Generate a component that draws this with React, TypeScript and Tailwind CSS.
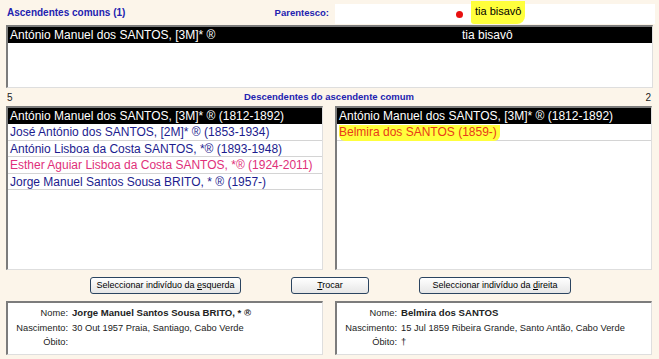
import React from 'react';

type Row = { text: string; tone: 'sel' | 'blue' | 'pink' | 'red' };

const leftRows: Row[] = [
  { text: 'António Manuel dos SANTOS, [3M]* ® (1812-1892)', tone: 'sel' },
  { text: 'José António dos SANTOS, [2M]* ® (1853-1934)', tone: 'blue' },
  { text: 'António Lisboa da Costa SANTOS, *® (1893-1948)', tone: 'blue' },
  { text: 'Esther Aguiar Lisboa da Costa SANTOS, *® (1924-2011)', tone: 'pink' },
  { text: 'Jorge Manuel Santos Sousa BRITO, * ® (1957-)', tone: 'blue' },
];

const rightRows: Row[] = [
  { text: 'António Manuel dos SANTOS, [3M]* ® (1812-1892)', tone: 'sel' },
  { text: 'Belmira dos SANTOS (1859-)', tone: 'red' },
];

const sunken =
  'bg-white border-l-2 border-t-2 border-r border-b border-l-[#7c7c7c] border-t-[#7c7c7c] border-r-[#dedede] border-b-[#dedede]';

const ListRow: React.FC<{ row: Row }> = ({ row }) => {
  if (row.tone === 'sel') {
    return (
      <div className="h-[16px] bg-black text-white pl-[2px] leading-[16px] whitespace-nowrap">
        {row.text}
      </div>
    );
  }
  const color =
    row.tone === 'pink' ? 'text-[#e0307a]' : row.tone === 'red' ? 'text-[#e83a1a]' : 'text-[#1c1c8e]';
  return (
    <div className={`h-[16.5px] border-b border-[#d4d4d4] pl-[2px] leading-[16px] whitespace-nowrap ${color}`}>
      {row.tone === 'red' ? (
        <span className="bg-[#ffff3c] rounded-b-[6px] pr-[3px] pb-[2px]">{row.text}</span>
      ) : (
        row.text
      )}
    </div>
  );
};

const Button: React.FC<{ className: string; children: React.ReactNode }> = ({ className, children }) => (
  <button
    className={`h-[17px] rounded-[3px] border border-[#2b4460] bg-gradient-to-b from-white to-[#e6e6e6] text-[9px] leading-[15px] text-black whitespace-nowrap ${className}`}
  >
    {children}
  </button>
);

const Details: React.FC<{ nome: string; nasc: string; obito: string }> = ({ nome, nasc, obito }) => (
  <div className={`${sunken} w-[317px] h-[54px] pt-[3px] text-[9.3px] leading-[14.5px] text-[#222]`}>
    {[
      ['Nome:', <b key="n" className="font-bold text-[9.6px]">{nome}</b>],
      ['Nascimento:', nasc],
      ['Óbito:', obito],
    ].map(([label, value], i) => (
      <div key={i} className="flex whitespace-nowrap">
        <span className="w-[64px] text-right pr-[4px]">{label}</span>
        <span>{value}</span>
      </div>
    ))}
  </div>
);

export default function App() {
  return (
    <div
      className="w-[659px] h-[359px] bg-[#fcf5ea] overflow-hidden flex flex-col text-[12px]"
      style={{ fontFamily: '"Liberation Sans", Arial, sans-serif' }}
    >
      {/* header */}
      <div className="h-[25px] flex items-start pt-[4px] pl-[7px] pr-[4px]">
        <div className="flex-1 font-bold text-[10px] text-[#2222b0] leading-[18px]">Ascendentes comuns (1)</div>
        <div className="font-bold text-[9.5px] text-[#2222b0] leading-[18px] mr-[6px]">Parentesco:</div>
        <div className="w-[320px] h-[20px] bg-white flex items-center">
          <span className="ml-[121px] w-[7px] h-[7px] rounded-full bg-[#e81010]" />
          <span className="ml-[8px] -mt-[4px] h-[23px] bg-[#ffff3c] rounded-br-[8px] rounded-bl-[3px] px-[4px] pt-[2px] leading-[17px] text-[11px] text-black">
            tia bisavô
          </span>
        </div>
      </div>

      {/* ascendentes list */}
      <div className={`${sunken} ml-[6px] w-[647px] h-[63px]`}>
        <div className="h-[16px] bg-black text-white leading-[16px] flex whitespace-nowrap">
          <span className="pl-[2px] w-[454px]">António Manuel dos SANTOS, [3M]* ®</span>
          <span>tia bisavô</span>
        </div>
      </div>

      {/* descendentes label row */}
      <div className="h-[18px] flex items-center pl-[7px] pr-[8px] text-[10px]">
        <span className="w-[20px] text-[#222]">5</span>
        <span className="flex-1 text-center font-bold text-[9.5px] text-[#2222b0]">Descendentes do ascendente comum</span>
        <span className="w-[20px] text-right text-[#222]">2</span>
      </div>

      {/* two lists */}
      <div className="h-[164px] flex gap-[12px] pl-[6px]">
        <div className={`${sunken} w-[317px] h-full`}>
          {leftRows.map((r, i) => (
            <ListRow key={i} row={r} />
          ))}
        </div>
        <div className={`${sunken} w-[317px] h-full`}>
          {rightRows.map((r, i) => (
            <ListRow key={i} row={r} />
          ))}
        </div>
      </div>

      {/* buttons */}
      <div className="h-[31px] pt-[7px] flex items-start">
        <Button className="ml-[90px] w-[151px]">
          Seleccionar indivíduo da <u className="underline-offset-1">e</u>squerda
        </Button>
        <Button className="ml-[50px] w-[78px]">
          <u className="underline-offset-1">T</u>rocar
        </Button>
        <Button className="ml-[50px] w-[152px]">
          Seleccionar indivíduo da <u className="underline-offset-1">d</u>ireita
        </Button>
      </div>

      {/* details */}
      <div className="flex gap-[12px] pl-[6px]">
        <Details
          nome="Jorge Manuel Santos Sousa BRITO, * ®"
          nasc="30 Out 1957 Praia, Santiago, Cabo Verde"
          obito=""
        />
        <Details
          nome="Belmira dos SANTOS"
          nasc="15 Jul 1859 Ribeira Grande, Santo Antão, Cabo Verde"
          obito="†"
        />
      </div>
    </div>
  );
}
